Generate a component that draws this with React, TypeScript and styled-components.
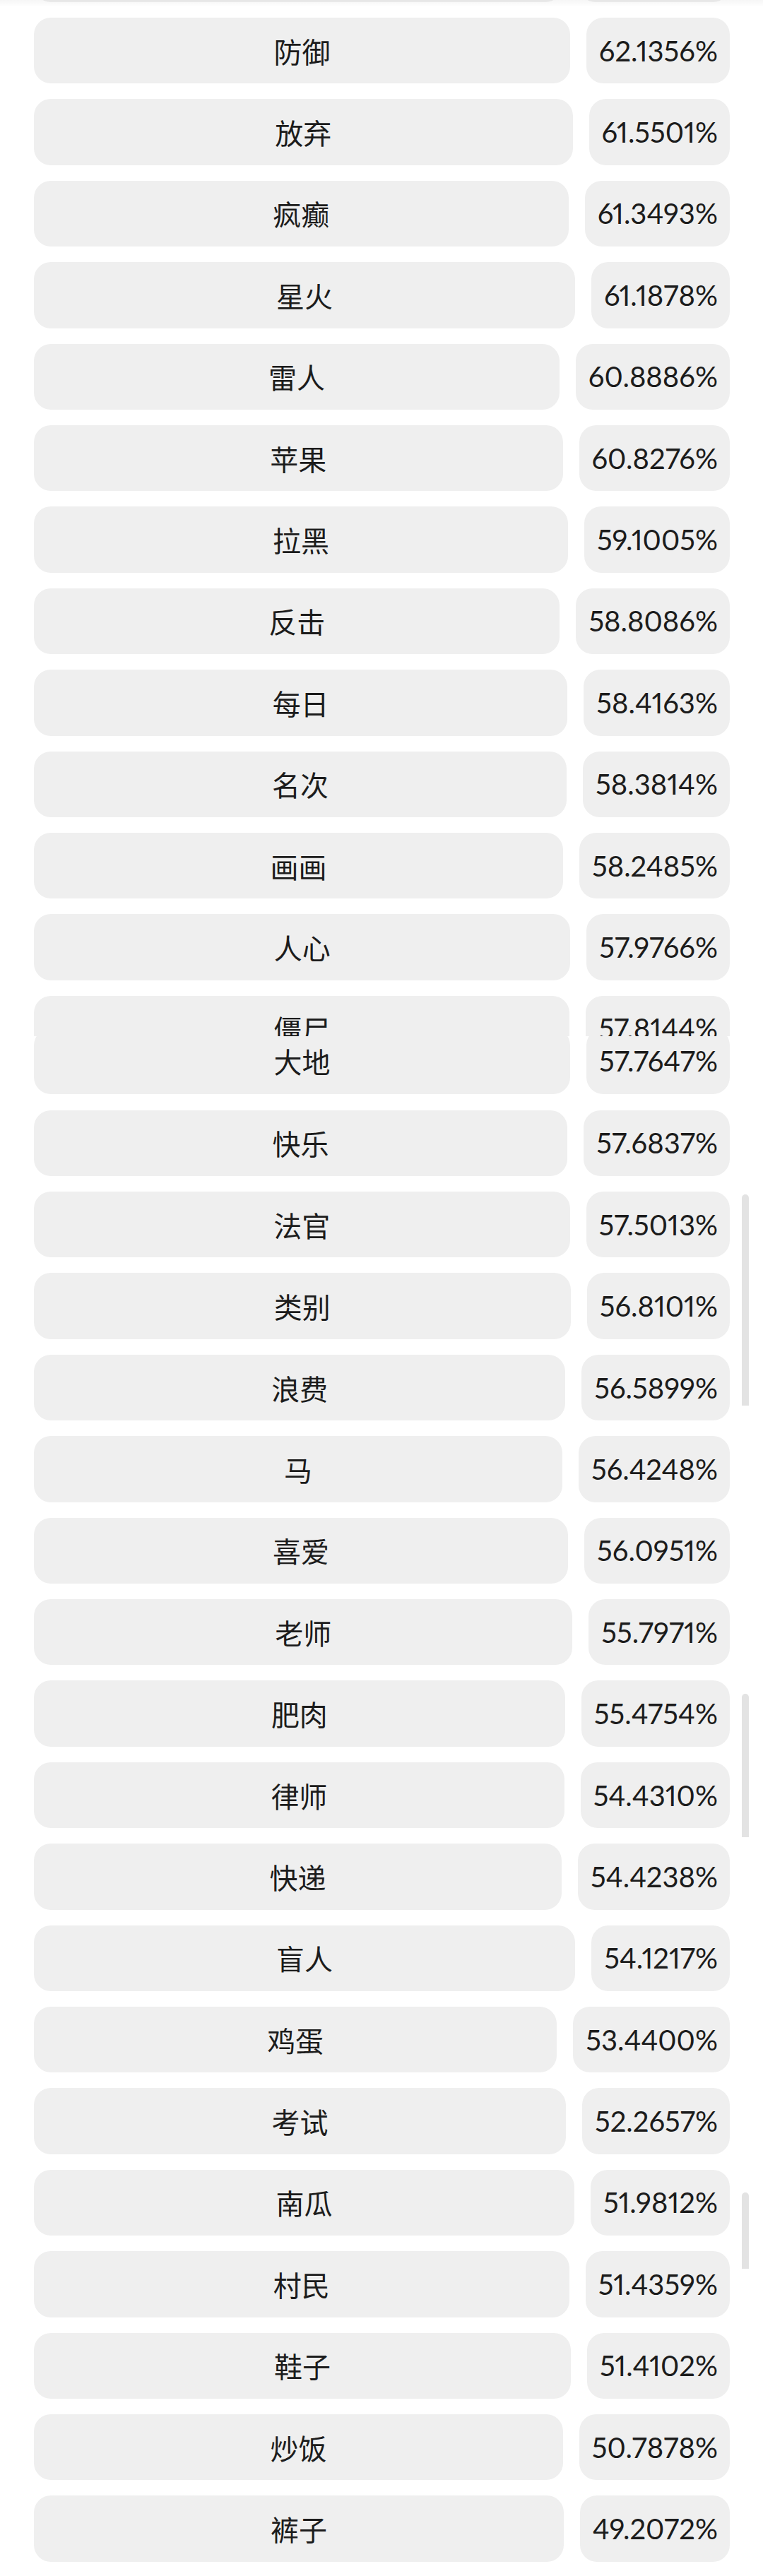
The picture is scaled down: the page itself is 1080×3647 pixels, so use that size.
import React from "react";
import styled, { createGlobalStyle } from "styled-components";

const GlobalStyle = createGlobalStyle`
  html, body {
    margin: 0;
    padding: 0;
    background: #ffffff;
  }
`;

const ROW_HEIGHT = 93.4;

const Page = styled.div`
  position: relative;
  width: 1080px;
  height: 3647px;
  overflow: hidden;
  background: #ffffff;
`;

const List = styled.div`
  display: flex;
  flex-direction: column;
  gap: 22px;
  padding: 0 47px 0 48px;
`;

const Row = styled.div`
  display: flex;
  gap: 23px;
  height: ${ROW_HEIGHT}px;
  flex: none;
`;

const Label = styled.div`
  flex: 1;
  display: flex;
  align-items: center;
  justify-content: center;
  background: #efefef;
  border-radius: 24px;
  color: #1c1c1c;
  font-family: "Noto Sans CJK SC", "Noto Sans", sans-serif;
  font-size: 40px;
  line-height: 1;
`;

const Value = styled.div`
  flex: none;
  display: flex;
  align-items: center;
  padding: 0 17px 0 18px;
  background: #efefef;
  border-radius: 24px;
  color: #1c1c1c;
  font-family: Lato, "Open Sans", sans-serif;
  font-size: 40px;
  line-height: 1;
  font-variant-numeric: proportional-nums;
`;

// screenshot stitching leaves rows cut off; a slice shows part of one
const Slice = styled.div<{ $height: number }>`
  height: ${(p) => p.$height}px;
  overflow: hidden;
  flex: none;
`;

const Shifted = styled.div<{ $shift: number }>`
  margin-top: -${(p) => p.$shift}px;
`;

const Stitched = styled.div`
  display: flex;
  flex-direction: column;
`;

const TopFade = styled.div`
  position: absolute;
  left: 0;
  right: 0;
  top: 0;
  height: 10px;
  background: linear-gradient(rgba(0, 0, 0, 0.035), rgba(0, 0, 0, 0));
  pointer-events: none;
`;

const ScrollThumb = styled.div<{ $top: number; $height: number }>`
  position: absolute;
  left: 1050px;
  width: 10px;
  top: ${(p) => p.$top}px;
  height: ${(p) => p.$height}px;
  background: #e3e3e3;
  border-radius: 5px 5px 0 0;
`;

type Entry = { word: string; rate: string };

const upper: Entry[] = [
  { word: "防御", rate: "62.1356%" },
  { word: "放弃", rate: "61.5501%" },
  { word: "疯癫", rate: "61.3493%" },
  { word: "星火", rate: "61.1878%" },
  { word: "雷人", rate: "60.8886%" },
  { word: "苹果", rate: "60.8276%" },
  { word: "拉黑", rate: "59.1005%" },
  { word: "反击", rate: "58.8086%" },
  { word: "每日", rate: "58.4163%" },
  { word: "名次", rate: "58.3814%" },
  { word: "画画", rate: "58.2485%" },
  { word: "人心", rate: "57.9766%" },
];

const lower: Entry[] = [
  { word: "快乐", rate: "57.6837%" },
  { word: "法官", rate: "57.5013%" },
  { word: "类别", rate: "56.8101%" },
  { word: "浪费", rate: "56.5899%" },
  { word: "马", rate: "56.4248%" },
  { word: "喜爱", rate: "56.0951%" },
  { word: "老师", rate: "55.7971%" },
  { word: "肥肉", rate: "55.4754%" },
  { word: "律师", rate: "54.4310%" },
  { word: "快递", rate: "54.4238%" },
  { word: "盲人", rate: "54.1217%" },
  { word: "鸡蛋", rate: "53.4400%" },
  { word: "考试", rate: "52.2657%" },
  { word: "南瓜", rate: "51.9812%" },
  { word: "村民", rate: "51.4359%" },
  { word: "鞋子", rate: "51.4102%" },
  { word: "炒饭", rate: "50.7878%" },
  { word: "裤子", rate: "49.2072%" },
];

const WordRow = ({ word, rate }: Entry) => (
  <Row>
    <Label>{word}</Label>
    <Value>{rate}</Value>
  </Row>
);

export default function App() {
  return (
    <Page>
      <GlobalStyle />
      <List>
        <Slice $height={3}>
          <Shifted $shift={ROW_HEIGHT - 3}>
            <WordRow word="" rate="62.4437%" />
          </Shifted>
        </Slice>
        {upper.map((e) => (
          <WordRow key={e.word} {...e} />
        ))}
        <Stitched>
          <Slice $height={57}>
            <WordRow word="僵尸" rate="57.8144%" />
          </Slice>
          <Slice $height={83}>
            <Shifted $shift={11}>
              <WordRow word="大地" rate="57.7647%" />
            </Shifted>
          </Slice>
        </Stitched>
        {lower.map((e) => (
          <WordRow key={e.word} {...e} />
        ))}
      </List>
      <TopFade />
      <ScrollThumb $top={1691} $height={299} />
      <ScrollThumb $top={2398} $height={203} />
      <ScrollThumb $top={3104} $height={108} />
    </Page>
  );
}
